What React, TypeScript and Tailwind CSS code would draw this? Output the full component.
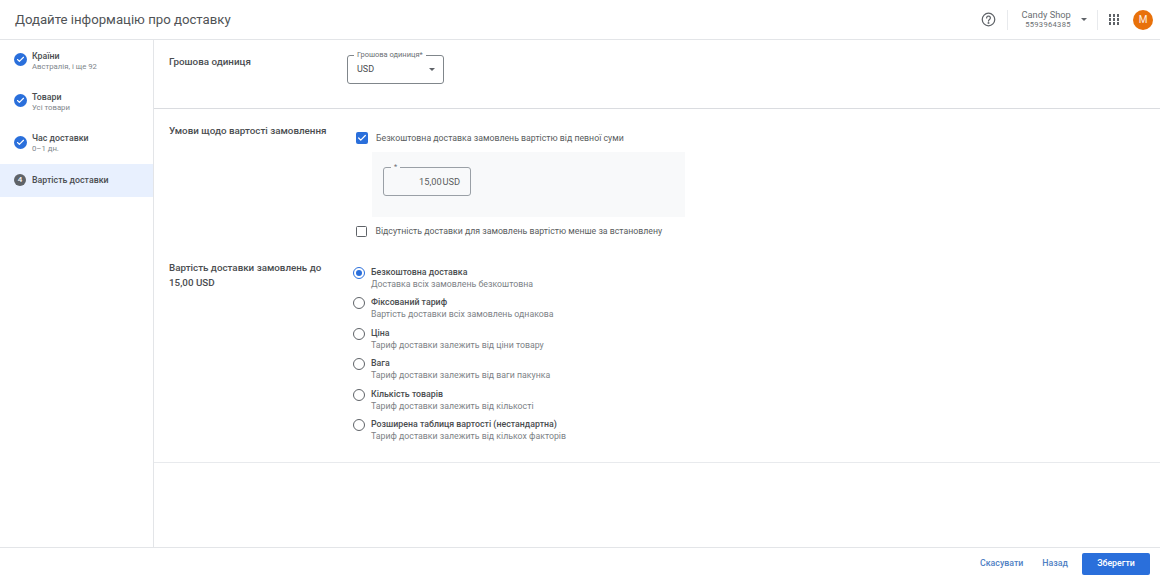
import React from 'react'
import { Check } from 'lucide-react'

const steps = [
  { title: 'Країни', sub: 'Австралія, і ще 92' },
  { title: 'Товари', sub: 'Усі товари' },
  { title: 'Час доставки', sub: '0–1 дн.' },
]

const rates = [
  { title: 'Безкоштовна доставка', sub: 'Доставка всіх замовлень безкоштовна', on: true },
  { title: 'Фіксований тариф', sub: 'Вартість доставки всіх замовлень однакова' },
  { title: 'Ціна', sub: 'Тариф доставки залежить від ціни товару' },
  { title: 'Вага', sub: 'Тариф доставки залежить від ваги пакунка' },
  { title: 'Кількість товарів', sub: 'Тариф доставки залежить від кількості' },
  { title: 'Розширена таблиця вартості (нестандартна)', sub: 'Тариф доставки залежить від кількох факторів' },
]

const Caret = ({ className }: { className: string }) => (
  <svg viewBox="0 0 10 5" className={className} fill="currentColor"><path d="M0 0l5 5 5-5z" /></svg>
)

const App: React.FC = () => {
  return (
    <div className="flex h-[579px] w-[1160px] flex-col overflow-hidden bg-white font-['Roboto',sans-serif] text-[#3c4043]">
      <header className="flex h-[40px] shrink-0 items-center border-b border-[#e3e5e8] pl-[15px] pr-[7px]">
        <h1 className="text-[13.2px] leading-none text-[#505356]">Додайте інформацію про доставку</h1>
        <div className="ml-auto flex items-center">
          <svg viewBox="0 0 24 24" className="h-[15px] w-[15px] text-[#5f6368]" fill="none" stroke="currentColor" strokeWidth="2">
            <circle cx="12" cy="12" r="10" />
            <path d="M9 9.5a3 3 0 1 1 4.6 2.5c-1 .7-1.6 1.2-1.6 2.5" strokeLinecap="round" />
            <circle cx="12" cy="17.5" r="0.6" fill="currentColor" />
          </svg>
          <div className="ml-[11px] h-[20px] w-px bg-[#e8eaed]" />
          <div className="ml-[13px] flex flex-col items-end text-[#6b6f73]">
            <span className="text-[9.3px] leading-[10px]">Candy Shop</span>
            <span className="text-[7.6px] leading-[10px] tracking-[0.3px]">5593964385</span>
          </div>
          <Caret className="ml-[10px] h-[3px] w-[6px] text-[#5f6368]" />
          <div className="ml-[10px] h-[20px] w-px bg-[#e8eaed]" />
          <div className="ml-[11px] grid grid-cols-3 gap-[1.5px]">
            {Array.from({ length: 9 }).map((_, i) => (
              <span key={i} className="h-[2.4px] w-[2.4px] bg-[#5f6368]" />
            ))}
          </div>
          <div className="ml-[14px] flex h-[20px] w-[20px] items-center justify-center rounded-full bg-[#e8710a] text-[10px] text-white/90">M</div>
        </div>
      </header>

      <div className="flex min-h-0 flex-1">
        <aside className="w-[154px] shrink-0 border-r border-[#e3e5e8]">
          {steps.map(s => (
            <div key={s.title} className="flex h-[41.3px] items-center pl-[14px]">
              <span className="mb-[2px] flex h-[13px] w-[13px] items-center justify-center rounded-full bg-[#2a6fdb]">
                <Check className="h-[9px] w-[9px] text-white" strokeWidth={3} />
              </span>
              <div className="ml-[5px] flex flex-col pt-[1px]">
                <span className="text-[8.8px] font-medium leading-[11px] text-[#4a4d50]">{s.title}</span>
                <span className="text-[7.75px] leading-[10px] text-[#80868b]">{s.sub}</span>
              </div>
            </div>
          ))}
          <div className="flex h-[33px] items-center bg-[#e8f0fe] pl-[14px]">
            <span className="flex h-[12px] w-[12px] items-center justify-center rounded-full bg-[#5f6368] text-[8px] font-medium text-white">4</span>
            <span className="ml-[6px] pt-[1px] text-[8.8px] font-medium text-[#4a4d50]">Вартість доставки</span>
          </div>
        </aside>

        <main className="min-w-0 flex-1">
          <section className="flex h-[69px] border-b border-[#dadce0] pl-[15px]">
            <h2 className="mt-[15px] w-[178px] text-[9.8px] font-medium leading-[13px] text-[#4a4d50]">Грошова одиниця</h2>
            <div className="relative mt-[14.5px] flex h-[29px] w-[97px] items-center rounded-[3px] border border-[#80868b] pl-[9px] pr-[8px]">
              <span className="absolute -top-[6px] left-[6px] bg-white px-[3px] text-[7.5px] leading-[10px] text-[#6b6f73]">Грошова одиниця*</span>
              <span className="pt-[1px] text-[9px] text-[#4a4d50]">USD</span>
              <Caret className="ml-auto h-[3px] w-[6px] text-[#5f6368]" />
            </div>
          </section>

          <section className="h-[354px] border-b border-[#e8eaed] pl-[15px]">
            <div className="flex">
              <h2 className="mt-[15px] w-[187px] text-[9.8px] font-medium leading-[13px] text-[#4a4d50]">Умови щодо вартості замовлення</h2>
              <div className="flex-1">
                <label className="mt-[23px] flex items-center">
                  <span className="flex h-[12px] w-[12px] items-center justify-center rounded-[2px] bg-[#2a6fdb]">
                    <Check className="h-[10px] w-[10px] text-white" strokeWidth={3} />
                  </span>
                  <span className="ml-[8px] text-[8.75px] leading-[12px] text-[#5a5d60]">Безкоштовна доставка замовлень вартістю від певної суми</span>
                </label>
                <div className="ml-[16px] mt-[8px] h-[65px] w-[313px] bg-[#f8f9fa] pl-[11px] pt-[15px]">
                  <div className="relative flex h-[29px] w-[88px] items-center justify-end rounded-[3px] border border-[#9aa0a6] pr-[10px]">
                    <span className="absolute -top-[5px] left-[7px] bg-[#f8f9fa] px-[3px] text-[7.5px] leading-[8px] text-[#6b6f73]">*</span>
                    <span className="text-[9.25px] [word-spacing:-1.5px] text-[#5a5d60]">15,00 USD</span>
                  </div>
                </div>
                <label className="mt-[8px] flex items-center">
                  <span className="h-[11px] w-[11px] rounded-[1.5px] border-[1.5px] border-[#5f6368]" />
                  <span className="ml-[8.5px] text-[8.75px] leading-[12px] text-[#5a5d60]">Відсутність доставки для замовлень вартістю менше за встановлену</span>
                </label>
              </div>
            </div>
            <div className="mt-[23px] flex">
              <h2 className="w-[184px] pr-[20px] text-[9.8px] font-medium leading-[15px] text-[#4a4d50]">Вартість доставки замовлень до 15,00 USD</h2>
              <div className="pt-[5.5px]">
                {rates.map(r => (
                  <div key={r.title} className="flex h-[30.5px] items-start">
                    <span className={`mt-[1px] flex h-[12px] w-[12px] items-center justify-center rounded-full border-[1.5px] ${r.on ? 'border-[#2a6fdb]' : 'border-[#5f6368]'}`}>
                      {r.on && <span className="h-[6px] w-[6px] rounded-full bg-[#2a6fdb]" />}
                    </span>
                    <div className="ml-[6px] flex flex-col">
                      <span className="text-[8.8px] font-medium leading-[12px] text-[#4a4d50]">{r.title}</span>
                      <span className="text-[8.77px] leading-[12px] text-[#7d8286]">{r.sub}</span>
                    </div>
                  </div>
                ))}
              </div>
            </div>
          </section>
        </main>
      </div>

      <footer className="flex h-[32px] shrink-0 items-center justify-end border-t border-[#e3e5e8] pr-[10px] text-[8.8px] font-medium">
        <button className="text-[#4f7fc4]">Скасувати</button>
        <button className="ml-[19px] text-[#4f7fc4]">Назад</button>
        <button className="ml-[14px] h-[22px] w-[68px] rounded-[2px] bg-[#2a6fdb] text-white">Зберегти</button>
      </footer>
    </div>
  )
}

export default App
